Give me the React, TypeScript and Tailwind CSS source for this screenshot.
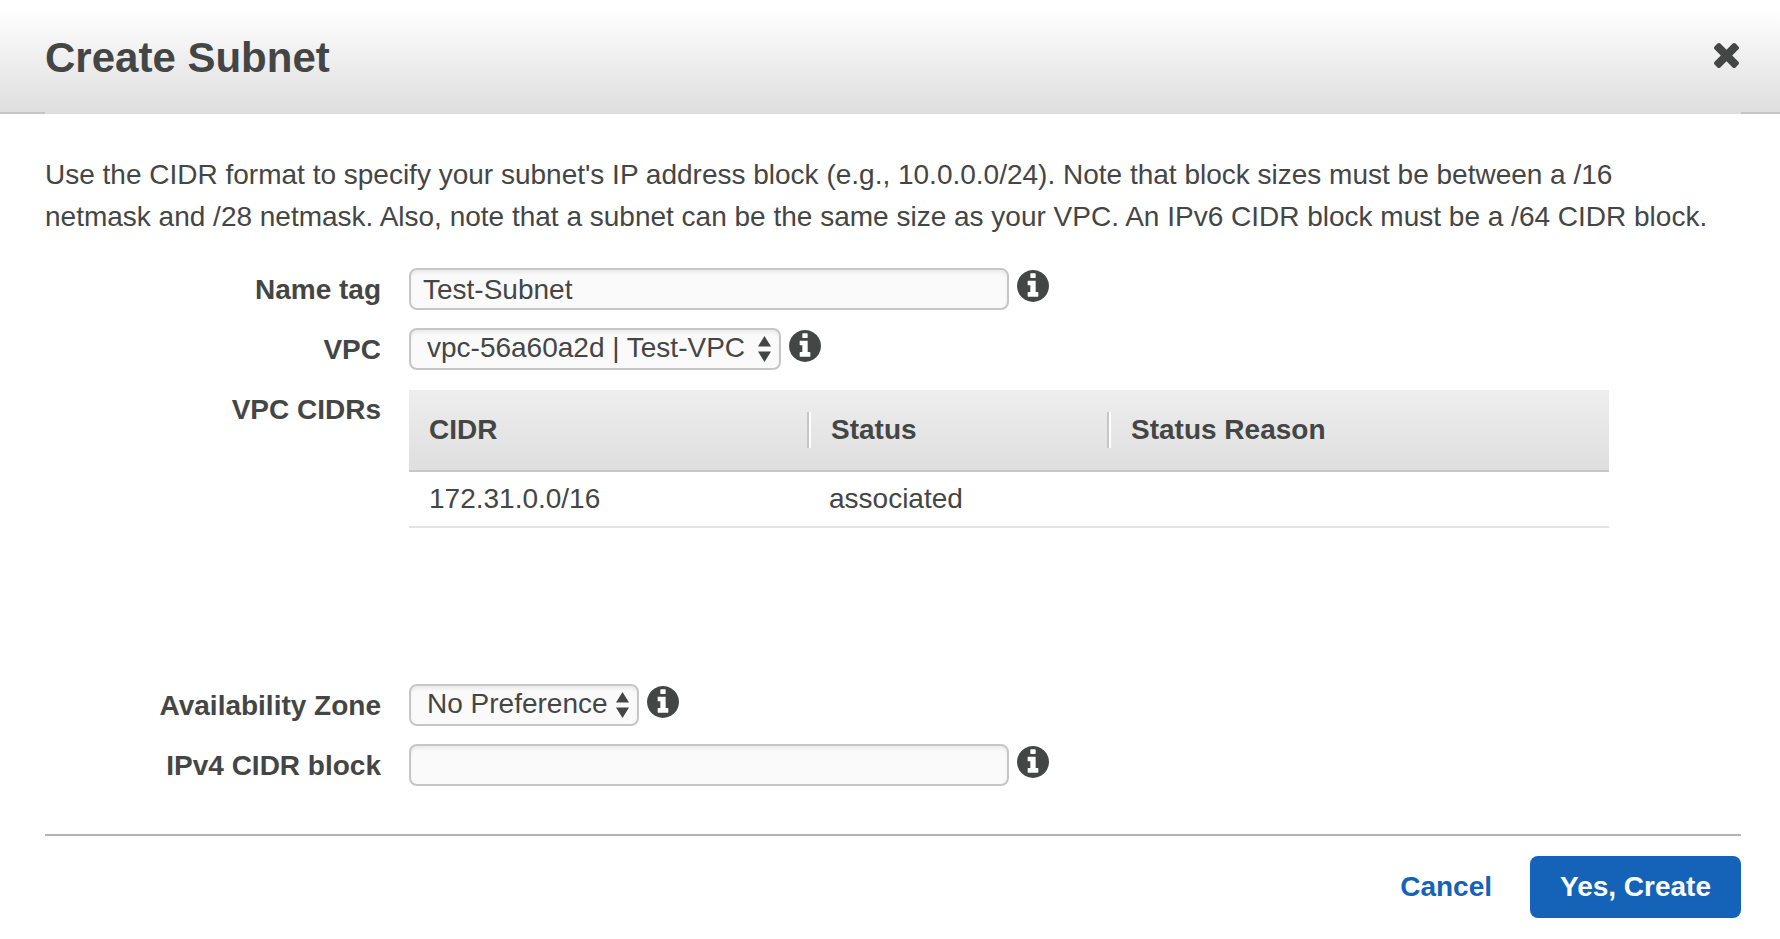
import type { ReactNode } from 'react';

const fieldClass =
  'h-[42px] max-w-full rounded-lg border-2 border-[#c6c6c6] bg-[#fafafa] text-[28px] text-[#444645] shadow-[inset_0_3px_3px_#ececec] outline-none';

function InfoButton({ label }: { label: string }) {
  return (
    <button type="button" aria-label={label} className="mt-0.5 shrink-0 text-[#444645]">
      <svg viewBox="128 128 1536 1536" className="size-8" fill="currentColor" aria-hidden="true">
        <path d="M1152 1376v-160q0-14-9-23t-23-9h-96v-512q0-14-9-23t-23-9h-320q-14 0-23 9t-9 23v160q0 14 9 23t23 9h96v320h-96q-14 0-23 9t-9 23v160q0 14 9 23t23 9h448q14 0 23-9t9-23zM1024 480v-160q0-14-9-23t-23-9h-192q-14 0-23 9t-9 23v160q0 14 9 23t23 9h192q14 0 23-9t9-23zM1664 896q0 209-103 385.500t-279.500 279.500-385.500 103-385.500-103-279.500-279.500-103-385.500 103-385.500 279.500-279.500 385.500-103 385.500 103 279.500 279.500 103 385.500z" />
      </svg>
    </button>
  );
}

function Row({ id, label, children }: { id: string; label: string; children: ReactNode }) {
  return (
    <div className="flex gap-7">
      <label htmlFor={id} className="w-[336px] shrink-0 text-right font-bold leading-[44px]">
        {label}
      </label>
      <div className="flex min-w-0 flex-1 items-start gap-2">{children}</div>
    </div>
  );
}

function Select({ id, value, width }: { id: string; value: string; width: string }) {
  return (
    <div className={`relative ${width}`}>
      <select
        id={id}
        defaultValue={value}
        className={`${fieldClass} block w-full appearance-none pr-7 pb-0.5 pl-4 leading-9`}
      >
        <option>{value}</option>
      </select>
      <svg
        viewBox="0 0 13 26"
        className="pointer-events-none absolute top-2 right-2.5 h-[26px] w-[13px]"
        fill="#444645"
        aria-hidden="true"
      >
        <path d="M6.500 0l6.500 10.500H0zM6.500 26l6.500-10.500H0z" />
      </svg>
    </div>
  );
}

export default function App() {
  return (
    <div
      role="dialog"
      aria-labelledby="dialog-title"
      className="bg-white pt-[9px] font-['Liberation_Sans',Arial,sans-serif] text-[28px] text-[#444645]"
    >
      <header className="bg-linear-to-b from-white via-[#eeeeee] to-[#dedede]">
        <div className="flex h-[103px] items-start justify-between pt-6 pr-[41px] pl-[45px]">
          <h1 id="dialog-title" className="text-[42px] leading-[50px] font-bold">
            Create Subnet
          </h1>
          <button type="button" aria-label="Close" className="mt-2.5">
            <svg viewBox="302 366 1188 1188" className="size-[25px]" fill="currentColor" aria-hidden="true">
              <path d="M1490 1322q0 40-28 68l-136 136q-28 28-68 28t-68-28l-294-294-294 294q-28 28-68 28t-68-28l-136-136q-28-28-28-68t28-68l294-294-294-294q-28-28-28-68t28-68l136-136q28-28 68-28t68 28l294 294 294-294q28-28 68-28t68 28l136 136q28 28 28 68t-28 68l-294 294 294 294q28 28 28 68z" />
            </svg>
          </button>
        </div>
        <div className="flex h-0.5 justify-between">
          <span className="w-[45px] bg-[#c6c6c6]" />
          <span className="w-[39px] bg-[#c6c6c6]" />
        </div>
      </header>

      <form className="pt-10 pr-[39px] pl-[45px]" onSubmit={(e) => e.preventDefault()}>
        <p className="max-w-[1676px] leading-[42px]">
          Use the CIDR format to specify your subnet's IP address block (e.g., 10.0.0.0/24). Note that block
          sizes must be between a /16 netmask and /28 netmask. Also, note that a subnet can be the same size as
          your VPC. An IPv6 CIDR block must be a /64 CIDR block.
        </p>

        <div className="mt-[30px] flex flex-col gap-4">
          <Row id="name-tag" label="Name tag">
            <input
              id="name-tag"
              type="text"
              defaultValue="Test-Subnet"
              className={`${fieldClass} w-[600px] px-3 pt-0.5`}
            />
            <InfoButton label="About the name tag" />
          </Row>
          <Row id="vpc" label="VPC">
            <Select id="vpc" value="vpc-56a60a2d | Test-VPC" width="w-[372px]" />
            <InfoButton label="About the VPC" />
          </Row>
          <div className="flex min-h-[280px] gap-7">
            <div id="cidrs-label" className="w-[336px] shrink-0 text-right font-bold leading-[44px]">
              VPC CIDRs
            </div>
            <div className="min-w-0 flex-1 pt-0.5">
              <table
                aria-labelledby="cidrs-label"
                className="w-full max-w-[1200px] table-fixed border-separate border-spacing-0 text-left"
              >
                <colgroup>
                  <col className="w-1/3" />
                  <col className="w-1/4" />
                  <col />
                </colgroup>
                <thead>
                  <tr className="h-[82px] bg-linear-to-b from-[#eeeeee] to-[#dedede]">
                    <th scope="col" className="border-b-2 border-[#c6c6c6] p-0">
                      <div className="border-r-2 border-[#c6c6c6] pl-5 leading-9">CIDR</div>
                    </th>
                    <th scope="col" className="border-b-2 border-[#c6c6c6] p-0">
                      <div className="border-r-2 border-l-2 border-r-[#c6c6c6] border-l-white pl-5 leading-9">
                        Status
                      </div>
                    </th>
                    <th scope="col" className="border-b-2 border-[#c6c6c6] p-0">
                      <div className="border-l-2 border-white pl-5 leading-9">Status Reason</div>
                    </th>
                  </tr>
                </thead>
                <tbody>
                  <tr className="h-14">
                    <td className="border-b-2 border-[#e3e3e3] px-5 py-0 leading-9">172.31.0.0/16</td>
                    <td className="border-b-2 border-[#e3e3e3] px-5 py-0 leading-9">associated</td>
                    <td className="border-b-2 border-[#e3e3e3] px-5 py-0 leading-9" />
                  </tr>
                </tbody>
              </table>
            </div>
          </div>
          <Row id="zone" label="Availability Zone">
            <Select id="zone" value="No Preference" width="w-[230px]" />
            <InfoButton label="About the availability zone" />
          </Row>
          <Row id="ipv4" label="IPv4 CIDR block">
            <input id="ipv4" type="text" className={`${fieldClass} w-[600px] px-3 pt-0.5`} />
            <InfoButton label="About the IPv4 CIDR block" />
          </Row>
        </div>

        <footer className="mt-[46px] flex items-center justify-end gap-[38px] border-t-2 border-[#b4b4b4] pt-5 pb-5 font-bold">
          <button type="button" className="text-[#1563b8]">
            Cancel
          </button>
          <button type="submit" className="h-[62px] rounded-lg bg-[#1563b8] px-[30px] text-white">
            Yes, Create
          </button>
        </footer>
      </form>
    </div>
  );
}
